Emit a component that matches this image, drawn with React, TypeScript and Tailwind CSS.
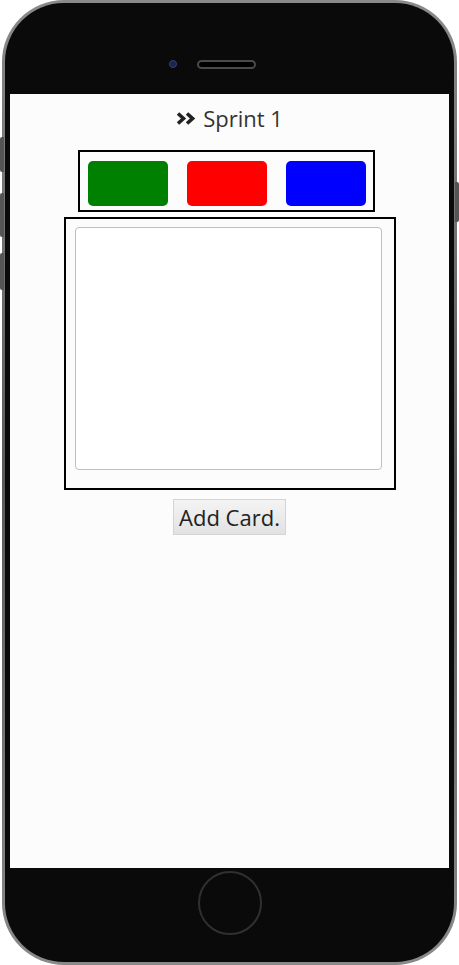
const swatches = [
  { id: 'green', color: 'bg-[#008000]' },
  { id: 'red', color: 'bg-[#ff0000]' },
  { id: 'blue', color: 'bg-[#0000ff]' },
];

function AnglesRight() {
  return (
    <svg width="19" height="13" viewBox="0 0 19 13" className="text-[#222]">
      <polyline points="2,1.5 7.5,6.5 2,11.5" fill="none" stroke="currentColor" strokeWidth="3.6" />
      <polyline points="11,1.5 16.5,6.5 11,11.5" fill="none" stroke="currentColor" strokeWidth="3.6" />
    </svg>
  );
}

function SprintBoard() {
  return (
    <div className="flex flex-col items-center bg-[#fcfcfc] h-full" style={{ fontFamily: '"Open Sans", sans-serif' }}>
      {/* Title */}
      <h1 className="flex items-center gap-[8px] mt-[9px] h-[30px] text-[22px] leading-none font-normal text-[#333]">
        <AnglesRight />
        Sprint 1
      </h1>

      {/* Colour picker */}
      <div className="flex gap-[19px] mt-[17px] mr-[7px] border-2 border-black pl-[8px] pr-[7px] pt-[9px] pb-[4px] w-[297px]">
        {swatches.map((s) => (
          <button key={s.id} className={`${s.color} w-[80px] h-[45px] rounded-[5px]`} />
        ))}
      </div>

      {/* Card editor */}
      <div className="mt-[5px] w-[332px] h-[273px] border-2 border-black pl-[9px] pr-[12px] pt-[8px] pb-[18px]">
        <textarea className="w-full h-full resize-none rounded-[4px] border border-[#bfbfbf] bg-white outline-none" />
      </div>

      <button className="mt-[9px] h-[36px] px-[5px] border border-[#d4d4d4] bg-gradient-to-b from-[#f4f4f4] to-[#e2e2e2] text-[22px] leading-none text-[#222]">
        Add Card.
      </button>
    </div>
  );
}

export default function App() {
  return (
    <div className="relative w-[459px] h-[965px] bg-white overflow-hidden">
      {/* Side buttons */}
      <div className="absolute left-0 top-[137px] w-[4px] h-[35px] rounded-l-[2px] bg-[#555]" />
      <div className="absolute left-0 top-[193px] w-[4px] h-[44px] rounded-l-[2px] bg-[#555]" />
      <div className="absolute left-0 top-[253px] w-[4px] h-[37px] rounded-l-[2px] bg-[#555]" />
      <div className="absolute right-0 top-[182px] w-[4px] h-[40px] rounded-r-[2px] bg-[#555]" />

      {/* Phone body */}
      <div className="ml-[2px] w-[455px] h-[965px] rounded-[62px] bg-gradient-to-b from-[#8a8a8a] via-[#5a5a5a] to-[#8a8a8a] p-[3px]">
        <div className="w-full h-full rounded-[59px] bg-[#0a0a0a] p-[4px] flex flex-col">
          <div className="h-[87px] flex items-start pt-[50px] pl-[160px] gap-[20px]">
            <div className="w-[8px] h-[8px] mt-[3px] rounded-full bg-[#1c2548] border border-[#34407a]" />
            <div className="w-[59px] h-[9px] mt-[3px] rounded-full bg-black border-2 border-[#4a4a4a]" />
          </div>
          <div className="h-[774px] mx-[1px]">
            <SprintBoard />
          </div>
          <div className="flex-1 flex items-start justify-center pt-[3px]">
            <div className="w-[64px] h-[64px] rounded-full border-2 border-[#303030]" />
          </div>
        </div>
      </div>
    </div>
  );
}
